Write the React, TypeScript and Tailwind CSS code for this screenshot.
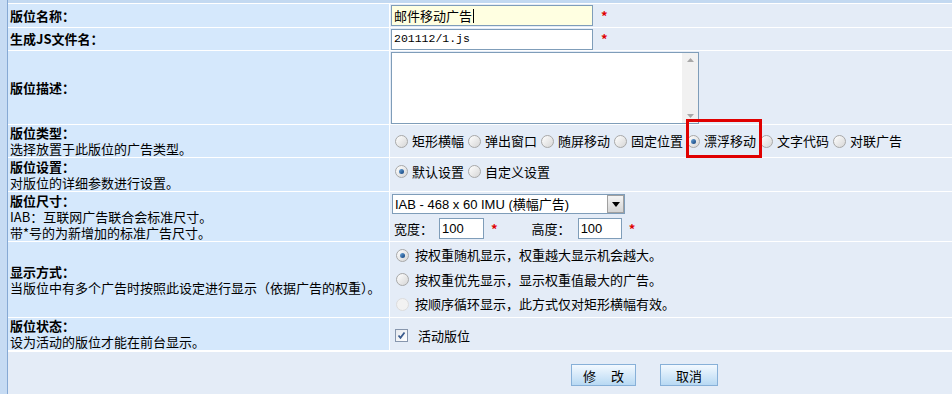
import React from "react";

const cjk = "font-['Noto_Sans_CJK_SC','Noto_Sans',sans-serif]";

function Radio({ checked = false, disabled = false }: { checked?: boolean; disabled?: boolean }) {
  return (
    <span
      className={
        "relative inline-block w-[13px] h-[13px] shrink-0 rounded-full border " +
        (disabled
          ? "border-[#dcdcdc] bg-[#f2f2f2]"
          : "border-[#a8a8a8] bg-gradient-to-br from-[#ffffff] to-[#d6d6d6]")
      }
    >
      {checked && (
        <span className="absolute left-[3px] top-[3px] w-[5px] h-[5px] rounded-full bg-gradient-to-br from-[#6fa8dc] to-[#0b3f7a]" />
      )}
    </span>
  );
}

function Star() {
  return <span className="text-[#e00000] text-[13px] font-bold">*</span>;
}

function Row({
  h,
  left,
  right,
  rightClass = "items-center",
}: {
  h: string;
  left: React.ReactNode;
  right: React.ReactNode;
  rightClass?: string;
}) {
  return (
    <div className={"grid grid-cols-[381px_1fr] gap-[1px] " + h}>
      <div className="bg-[#d5e8fc] pl-[2px] flex flex-col justify-center leading-[16px]">{left}</div>
      <div className={"bg-[#e4ecf7] pl-[1px] flex " + rightClass}>{right}</div>
    </div>
  );
}

const types = ["矩形横幅", "弹出窗口", "随屏移动", "固定位置", "漂浮移动", "文字代码", "对联广告"];

export default function App() {
  return (
    <div className={"relative w-[952px] h-[394px] overflow-hidden bg-white flex text-[13px] text-black " + cjk}>
      <div className="w-[8px] bg-[#c6dbf3] border-r border-[#86a9d4]" />
      <div className="flex-1 flex flex-col gap-[1px]">
        <div className="h-[3px] bg-[#c3d9f1]" />

        <Row
          h="h-[23px]"
          left={<b>版位名称：</b>}
          right={
            <>
              <div className="w-[202px] h-[21px] border border-[#7f9db9] bg-[#ffffe1] pl-[2px] flex items-center">
                邮件移动广告<span className="w-[1px] h-[14px] bg-black ml-[1px]" />
              </div>
              <span className="ml-[8px]">
                <Star />
              </span>
            </>
          }
        />

        <Row
          h="h-[22px]"
          left={<b>生成JS文件名：</b>}
          right={
            <>
              <div className="w-[202px] h-[21px] border border-[#7f9db9] bg-white pl-[2px] flex items-center font-['Liberation_Mono',monospace] text-[11.5px]">
                201112/1.js
              </div>
              <span className="ml-[8px]">
                <Star />
              </span>
            </>
          }
        />

        <Row
          h="h-[73px]"
          left={<b>版位描述：</b>}
          right={
            <div className="w-[308px] h-[72px] border border-[#7f9db9] bg-white flex justify-end">
              <div className="w-[16px] h-full bg-[#f1f1f1] flex flex-col items-center justify-between py-[5px]">
                <svg width="7" height="4" viewBox="0 0 7 4">
                  <path d="M0 4 L3.5 0 L7 4 Z" fill="#a8a8a8" />
                </svg>
                <svg width="7" height="4" viewBox="0 0 7 4">
                  <path d="M0 0 L3.5 4 L7 0 Z" fill="#a8a8a8" />
                </svg>
              </div>
            </div>
          }
        />

        <Row
          h="h-[32px]"
          left={
            <>
              <b>版位类型：</b>
              <span>选择放置于此版位的广告类型。</span>
            </>
          }
          right={
            <div className="flex items-center pl-[4px]">
              {types.map((t, i) => (
                <span key={t} className="flex items-center mr-[4px]">
                  <span className="mr-[4px] flex">
                    <Radio checked={i === 4} />
                  </span>
                  {t}
                </span>
              ))}
            </div>
          }
        />

        <Row
          h="h-[33px]"
          rightClass="items-start pt-[4px]"
          left={
            <>
              <b>版位设置：</b>
              <span>对版位的详细参数进行设置。</span>
            </>
          }
          right={
            <div className="flex items-center pl-[4px]">
              <span className="flex items-center mr-[4px]">
                <span className="mr-[4px] flex">
                  <Radio checked />
                </span>
                默认设置
              </span>
              <span className="flex items-center">
                <span className="mr-[4px] flex">
                  <Radio />
                </span>
                自定义设置
              </span>
            </div>
          }
        />

        <Row
          h="h-[49px]"
          rightClass="flex-col justify-center"
          left={
            <>
              <b>版位尺寸：</b>
              <span>IAB：互联网广告联合会标准尺寸。</span>
              <span>带*号的为新增加的标准广告尺寸。</span>
            </>
          }
          right={
            <>
              <div className="w-[233px] h-[20px] border border-[#7f9db9] bg-white flex items-center ml-[1px]">
                <span className="flex-1 pl-[2px] font-['Liberation_Sans',sans-serif] text-[13px] leading-none">
                  IAB - 468 x 60 IMU (<span className={cjk}>横幅广告</span>)
                </span>
                <span className="w-[17px] h-[18px] bg-gradient-to-b from-[#f4f4f4] to-[#d4d4d4] border border-[#a0a0a0] flex items-center justify-center">
                  <svg width="8" height="5" viewBox="0 0 8 5">
                    <path d="M0 0 L8 0 L4 5 Z" fill="#000" />
                  </svg>
                </span>
              </div>
              <div className="flex items-center mt-[4px] pl-[3px]">
                <span>宽度：</span>
                <div className="w-[45px] h-[21px] border border-[#7f9db9] bg-white ml-[6px] pl-[2px] flex items-center font-['Liberation_Sans',sans-serif]">
                  100
                </div>
                <span className="ml-[7px]">
                  <Star />
                </span>
                <span className="ml-[34px]">高度：</span>
                <div className="w-[44px] h-[21px] border border-[#7f9db9] bg-white ml-[7px] pl-[2px] flex items-center font-['Liberation_Sans',sans-serif]">
                  100
                </div>
                <span className="ml-[7px]">
                  <Star />
                </span>
              </div>
            </>
          }
        />

        <Row
          h="h-[75px]"
          rightClass="flex-col justify-center"
          left={
            <>
              <b>显示方式：</b>
              <span>当版位中有多个广告时按照此设定进行显示（依据广告的权重）。</span>
            </>
          }
          right={
            <>
              {[
                { t: "按权重随机显示，权重越大显示机会越大。", c: true, d: false },
                { t: "按权重优先显示，显示权重值最大的广告。", c: false, d: false },
                { t: "按顺序循环显示，此方式仅对矩形横幅有效。", c: false, d: true },
              ].map((o) => (
                <div key={o.t} className="h-[24.5px] flex items-center pl-[5px]">
                  <span className="mr-[6px] flex">
                    <Radio checked={o.c} disabled={o.d} />
                  </span>
                  {o.t}
                </div>
              ))}
            </>
          }
        />

        <Row
          h="h-[32px]"
          left={
            <>
              <b>版位状态：</b>
              <span>设为活动的版位才能在前台显示。</span>
            </>
          }
          right={
            <div className="flex items-center pl-[4px] pt-[3px]">
              <span className="w-[13px] h-[13px] border border-[#8796ad] bg-gradient-to-br from-[#e6e9ee] to-[#ffffff] flex items-center justify-center">
                <svg width="9" height="9" viewBox="0 0 9 9">
                  <path d="M1.5 4.5 L3.5 6.8 L7.5 1.5" stroke="#3a5a8c" strokeWidth="1.8" fill="none" />
                </svg>
              </span>
              <span className="ml-[10px]">活动版位</span>
            </div>
          }
        />

        <div className="mt-[1px] flex-1 bg-[#e4ecf7] flex items-start pt-[12px] pl-[563px]">
          <button className="w-[65px] h-[22px] border border-[#87b0d8] bg-gradient-to-b from-[#f3f9ff] to-[#b8d9f3] text-[13px] leading-none tracking-[6px] pl-[6px]">
            修 改
          </button>
          <button className="ml-[24px] w-[58px] h-[22px] border border-[#87b0d8] bg-gradient-to-b from-[#f3f9ff] to-[#b8d9f3] text-[13px] leading-none">
            取消
          </button>
        </div>
      </div>

      <div className="absolute left-[686px] top-[119px] w-[76px] h-[39px] border-[3px] border-[#e00000]" />
    </div>
  );
}
